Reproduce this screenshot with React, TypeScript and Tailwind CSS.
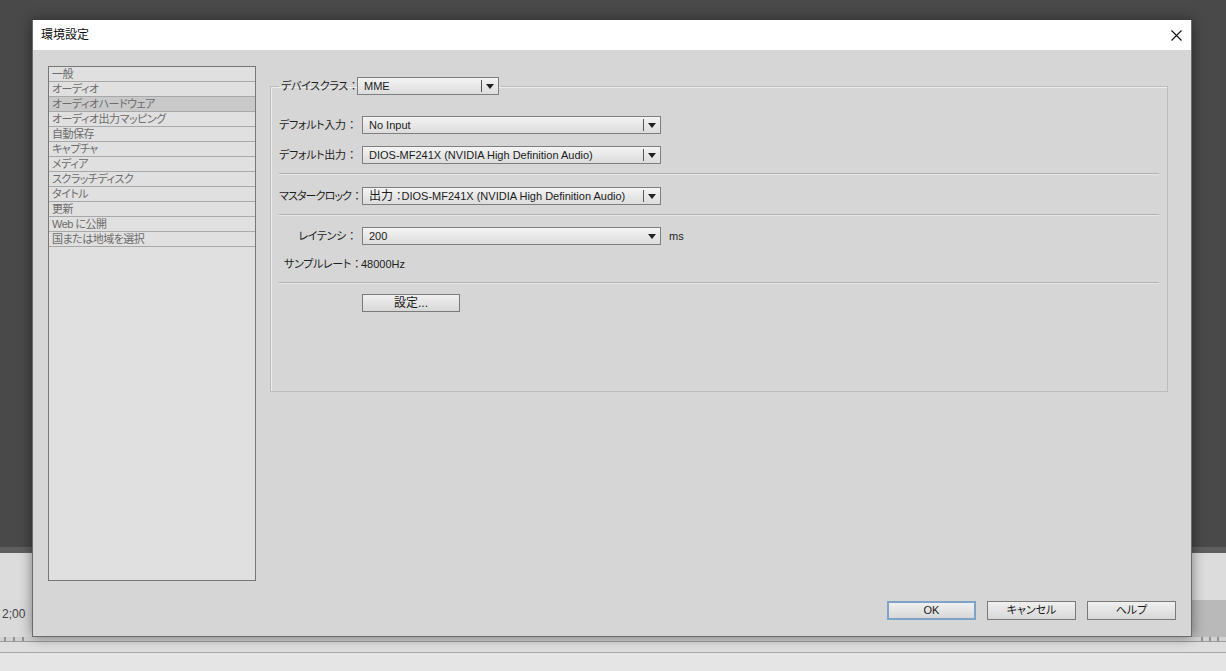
import React from "react";

const FONT = "font-['Liberation_Sans','Noto_Sans_CJK_JP',sans-serif] [font-feature-settings:'palt']";

function Arrow() {
  return (
    <svg width="8" height="5" viewBox="0 0 8 5">
      <path d="M0 0 H8 L4 5 Z" fill="#222" />
    </svg>
  );
}

function Dropdown({
  className,
  children,
  divider = true,
}: {
  className: string;
  children: React.ReactNode;
  divider?: boolean;
}) {
  return (
    <div
      className={`flex h-[18px] border border-[#7f7f7f] bg-gradient-to-b from-[#f4f4f4] to-[#dcdcdc] ${className}`}
    >
      <div className="flex flex-1 items-center overflow-hidden whitespace-nowrap pl-[6px] text-[11px] leading-none text-[#1c1c1c]">
        {children}
      </div>
      <div className="flex w-[17px] items-center">
        <div className={`h-[12px] w-px ${divider ? "bg-[#555]" : "bg-transparent"}`} />
        <div className="flex flex-1 items-center justify-center">
          <Arrow />
        </div>
      </div>
    </div>
  );
}

function Colon() {
  return <span className="w-[11px] shrink-0 text-center [font-feature-settings:normal]">：</span>;
}

function Label({ text, right = false, tight = false }: { text: string; right?: boolean; tight?: boolean }) {
  return (
    <div
      className={`flex w-[83px] shrink-0 items-center whitespace-nowrap pr-[5px] text-[11px] text-[#1e1e1e] ${
        right ? "justify-end" : "justify-between"
      } ${tight ? "tracking-[-0.9px]" : "tracking-[-0.3px]"}`}
    >
      <span className="whitespace-nowrap">{text}</span>
      <Colon />
    </div>
  );
}

function Sep() {
  return <div className="h-px bg-[#b2b2b2] shadow-[0_1px_0_#e6e6e6]" />;
}

function Btn({ children, ok = false }: { children: React.ReactNode; ok?: boolean }) {
  return (
    <div
      className={`flex h-[19px] w-[89px] items-center justify-center bg-gradient-to-b from-[#f0f0f0] to-[#d8d8d8] text-[11px] leading-none text-[#1a1a1a] ${
        ok ? "border-2 border-[#7ea3c6]" : "border border-[#7a7a7a]"
      }`}
    >
      {children}
    </div>
  );
}

const items = [
  "一般",
  "オーディオ",
  "オーディオハードウェア",
  "オーディオ出力マッピング",
  "自動保存",
  "キャプチャ",
  "メディア",
  "スクラッチディスク",
  "タイトル",
  "更新",
  "Web に公開",
  "国または地域を選択",
];

export default function App() {
  return (
    <div className={`relative h-[671px] w-[1226px] overflow-hidden ${FONT}`}>
      {/* background application */}
      <div className="flex h-full flex-col">
        <div className="h-[547px] bg-[#494949]" />
        <div className="h-[6px] bg-[#5f5f5f]" />
        <div className="h-[47px] bg-[#dcdcdc]" />
        <div className="flex h-[37px]">
          <div className="flex w-[32px] items-start overflow-hidden bg-[#dadada] pl-[2px] pt-[5px] text-[12px] text-[#444]">
            2;00
          </div>
          <div className="flex-1 bg-[#b9b9b9]" />
        </div>
        <div className="flex h-[4px] bg-[#d2d2d2]">
          <svg width="1226" height="4">
            <path d="M5 0v4M14 0v4M23 0v4M1202 0v4M1210 0v4M1218 0v4" stroke="#555" strokeWidth="1" />
          </svg>
        </div>
        <div className="h-px bg-[#9a9a9a]" />
        <div className="h-[10px] bg-[#dedede]" />
        <div className="h-px bg-[#a6a6a6]" />
        <div className="flex-1 bg-[#e5e5e5]" />
      </div>

      {/* dialog */}
      <div className="absolute left-[32px] top-[20px] flex h-[617px] w-[1160px] flex-col border-x border-b border-[#6a6a6a] bg-[#d6d6d6] shadow-[0_0_12px_rgba(0,0,0,0.45)]">
        <div className="flex h-[30px] shrink-0 items-center justify-between bg-white pl-[8px] pr-[9px]">
          <span className="text-[12px] text-[#111]">環境設定</span>
          <svg width="11" height="11" viewBox="0 0 11 11">
            <path d="M0.5 0.5L10.5 10.5M10.5 0.5L0.5 10.5" stroke="#111" strokeWidth="1.1" />
          </svg>
        </div>

        <div className="flex flex-1 items-start">
          {/* left list */}
          <div className="ml-[15px] mt-[16px] flex h-[515px] w-[208px] shrink-0 flex-col border border-[#777] bg-[#e0e0e0]">
            {items.map((it, i) => (
              <div
                key={it}
                className={`flex h-[15px] items-center whitespace-nowrap border-b border-[#a8a8a8] pl-[3px] pt-px text-[11px] leading-none tracking-[-0.5px] text-[#6c6c6c] ${
                  i === 2 ? "bg-[#c9c9c9]" : ""
                }`}
              >
                {it}
              </div>
            ))}
          </div>

          {/* right panel */}
          <fieldset className="ml-[14px] mt-[27px] w-[898px] border border-[#bcbcbc] px-[8px] pb-[79px] shadow-[inset_1px_1px_0_#ececec]">
            <legend className="flex items-center px-[2px]">
              <span className="flex w-[76px] items-center whitespace-nowrap pr-[1px] text-[11px] tracking-[-0.3px] text-[#1e1e1e]">
                <span>デバイスクラス</span>
                <Colon />
              </span>
              <Dropdown className="w-[142px]">MME</Dropdown>
            </legend>

            <div className="mt-[21px] flex items-center">
              <Label text="デフォルト入力" />
              <Dropdown className="w-[299px]">No Input</Dropdown>
            </div>
            <div className="mt-[12px] flex items-center">
              <Label text="デフォルト出力" />
              <Dropdown className="w-[299px]">DIOS-MF241X (NVIDIA High Definition Audio)</Dropdown>
            </div>
            <div className="mt-[9px]">
              <Sep />
            </div>
            <div className="mt-[13px] flex items-center">
              <Label text="マスタークロック" tight />
              <Dropdown className="w-[299px]">
                <span className="text-[12px]">出力</span>
                <span className="ml-[3px]">：DIOS-MF241X (NVIDIA High Definition Audio)</span>
              </Dropdown>
            </div>
            <div className="mt-[9px]">
              <Sep />
            </div>
            <div className="mt-[12px] flex items-center">
              <Label text="レイテンシ" right />
              <Dropdown className="w-[299px]" divider={false}>
                200
              </Dropdown>
              <span className="ml-[8px] text-[11px] text-[#1e1e1e]">ms</span>
            </div>
            <div className="mt-[10px] flex h-[18px] items-center whitespace-nowrap pl-[5px] text-[11px] tracking-[-0.3px] text-[#1e1e1e]">
              <span className="flex w-[77px] shrink-0 items-center justify-between whitespace-nowrap">
                <span className="whitespace-nowrap">サンプルレート</span>
                <Colon />
              </span>
              <span className="tracking-normal">48000Hz</span>
            </div>
            <div className="mt-[9px]">
              <Sep />
            </div>
            <div className="ml-[83px] mt-[11px] flex h-[18px] w-[98px] items-center justify-center border border-[#7a7a7a] bg-gradient-to-b from-[#f0f0f0] to-[#d8d8d8] text-[12px] leading-none text-[#1a1a1a]">
              設定...
            </div>
          </fieldset>
        </div>

        <div className="flex shrink-0 justify-end gap-[11px] pb-[16px] pr-[15px]">
          <Btn ok>OK</Btn>
          <Btn>キャンセル</Btn>
          <Btn>ヘルプ</Btn>
        </div>
      </div>
    </div>
  );
}
